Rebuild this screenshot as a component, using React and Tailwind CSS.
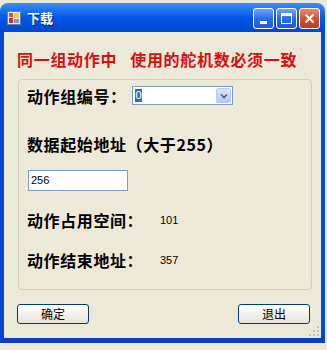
import React from "react";

const cjk = { fontFamily: '"Noto Sans CJK SC", "Noto Sans", sans-serif' };
const small = { fontFamily: '"Liberation Sans", Arial, sans-serif' };

function AppIcon() {
  return (
    <svg width="14" height="14" viewBox="0 0 14 14">
      <rect x="0.5" y="0.5" width="13" height="13" fill="#e8e8f0" stroke="#6b7fa8" />
      <rect x="2" y="2" width="4" height="4" fill="#d9532a" />
      <rect x="7" y="2" width="5" height="5" fill="#f6c445" />
      <rect x="2" y="7" width="4" height="5" fill="#c7352b" />
      <rect x="7" y="8" width="5" height="4" fill="#7c9ad6" />
    </svg>
  );
}

function TitleButton({ children, close }) {
  return (
    <div
      className={
        "flex h-[21px] w-[21px] items-center justify-center rounded-[3px] border border-white " +
        (close
          ? "bg-gradient-to-b from-[#e98a6c] via-[#d8512c] to-[#c23a16]"
          : "bg-gradient-to-b from-[#6ea3ff] via-[#2a6cf0] to-[#1f56d8]")
      }
    >
      {children}
    </div>
  );
}

export default function App() {
  return (
    <div className="h-[350px] w-[327px] bg-[#ece9d8] pt-[3px]">
      <div className="flex h-[340px] w-[325px] flex-col overflow-hidden rounded-t-[8px]">
        <div className="flex h-[29px] shrink-0 items-center bg-gradient-to-b from-[#3b8cf5] via-[#0058e6] to-[#0047d0] pl-[7px] pr-[5px]">
          <AppIcon />
          <span
            className="ml-[6px] text-[13px] font-bold leading-none text-white [text-shadow:1px_1px_0_#0a1e6e]"
            style={cjk}
          >
            下载
          </span>
          <div className="ml-auto flex gap-[2px] pt-[1px]">
            <TitleButton>
              <div className="mt-[8px] h-[3px] w-[7px] bg-white" />
            </TitleButton>
            <TitleButton>
              <div className="h-[11px] w-[11px] border border-t-[3px] border-white" />
            </TitleButton>
            <TitleButton close>
              <svg width="11" height="11" viewBox="0 0 11 11">
                <path d="M1.5 1.5 L9.5 9.5 M9.5 1.5 L1.5 9.5" stroke="white" strokeWidth="2" />
              </svg>
            </TitleButton>
          </div>
        </div>

        <div className="relative flex flex-1 flex-col border-x-4 border-b-[5px] border-x-[#0846d8] border-b-[#0a3fc4] bg-[#ece9d8]">
          <div
            className="mt-[19px] whitespace-pre pl-[13px] text-[16px] font-bold leading-[16px] tracking-[0.7px] text-[#d41010]"
            style={cjk}
          >
            同一组动作中   使用的舵机数必须一致
          </div>

          <div className="ml-[14px] mt-[12px] flex h-[211px] w-[294px] flex-col rounded-[4px] border border-[#d0d0bf] pl-[8px]">
            <div className="mt-[6px] flex h-[19px] items-center">
              <span
                className="w-[105px] text-[16px] font-bold leading-[16px] tracking-[0.6px] text-black"
                style={cjk}
              >
                动作组编号：
              </span>
              <div className="flex h-[19px] w-[101px] items-center border border-[#7f9db9] bg-white pl-[2px] pr-[1px]">
                <span
                  className="flex h-[13px] w-[7px] items-center justify-center bg-[#316ac5] text-[11px] leading-none text-white"
                  style={small}
                >
                  0
                </span>
                <div className="ml-auto flex h-[15px] w-[15px] items-center justify-center rounded-[2px] border border-[#b5c8f2] bg-gradient-to-b from-[#dbe6fd] to-[#b3c8f6]">
                  <svg width="8" height="6" viewBox="0 0 8 6">
                    <path d="M1 1.5 L4 4.5 L7 1.5" fill="none" stroke="#4d6185" strokeWidth="1.6" />
                  </svg>
                </div>
              </div>
            </div>

            <div
              className="mt-[31px] text-[16px] font-bold leading-[16px] tracking-[0.6px] text-black"
              style={cjk}
            >
              数据起始地址（大于255）
            </div>

            <div className="ml-[1px] mt-[18px] flex h-[21px] w-[100px] items-center border border-[#7f9db9] bg-white pl-[2px]">
              <span className="text-[11px] leading-none text-black" style={small}>
                256
              </span>
            </div>

            <div className="mt-[21px] flex items-center">
              <span
                className="w-[133px] text-[16px] font-bold leading-[16px] tracking-[0.6px] text-black"
                style={cjk}
              >
                动作占用空间：
              </span>
              <span className="text-[11px] leading-none text-black" style={small}>
                101
              </span>
            </div>

            <div className="mt-[24px] flex items-center">
              <span
                className="w-[133px] text-[16px] font-bold leading-[16px] tracking-[0.6px] text-black"
                style={cjk}
              >
                动作结束地址：
              </span>
              <span className="text-[11px] leading-none text-black" style={small}>
                357
              </span>
            </div>
          </div>

          <div className="mt-[14px] flex justify-between pl-[13px] pr-[11px]">
            <button
              className="flex h-[20px] w-[72px] items-center justify-center rounded-[3px] border border-[#003c74] bg-gradient-to-b from-white to-[#e6e4dc] text-[12px] leading-none text-black"
              style={cjk}
            >
              确定
            </button>
            <button
              className="flex h-[20px] w-[72px] items-center justify-center rounded-[3px] border border-[#003c74] bg-gradient-to-b from-white to-[#e6e4dc] text-[12px] leading-none text-black"
              style={cjk}
            >
              退出
            </button>
          </div>

          <svg className="absolute bottom-[1px] right-[1px]" width="11" height="11" viewBox="0 0 11 11">
            <g fill="#c2bfb0">
              <rect x="8" y="0" width="2" height="2" />
              <rect x="4" y="4" width="2" height="2" />
              <rect x="8" y="4" width="2" height="2" />
              <rect x="0" y="8" width="2" height="2" />
              <rect x="4" y="8" width="2" height="2" />
              <rect x="8" y="8" width="2" height="2" />
            </g>
          </svg>
        </div>
      </div>
    </div>
  );
}
